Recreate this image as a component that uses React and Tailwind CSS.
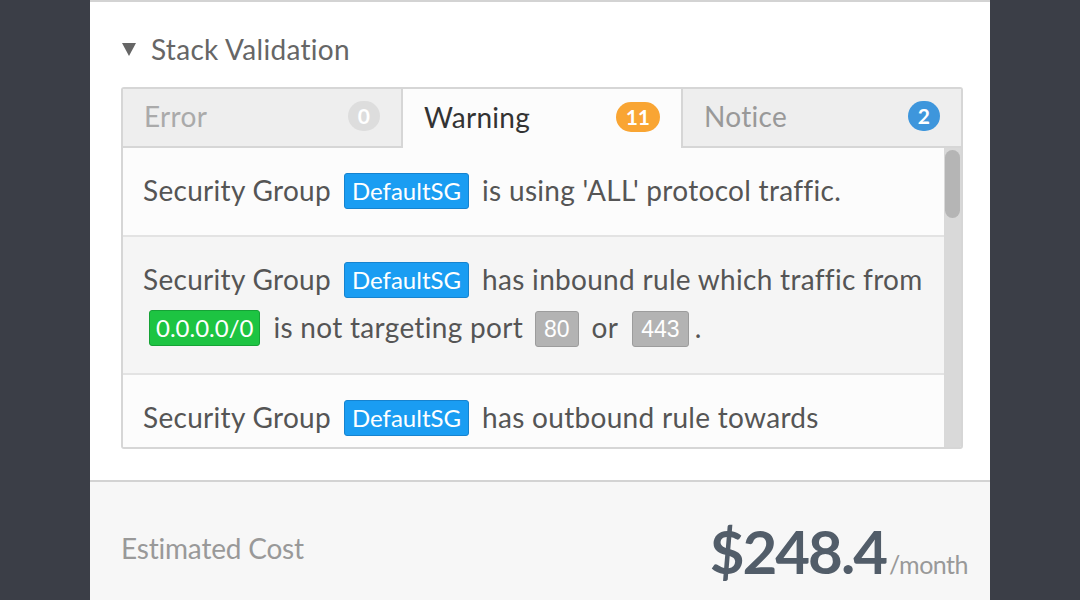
import React from "react";

const Tag = ({ color, children, className = "mx-[13px]" }) => {
  const cls =
    color === "blue"
      ? "bg-[#1a9df2] border-[#1683cf] px-[7px] text-[24px]"
      : color === "green"
      ? "bg-[#1dc442] border-[#16a236] px-[6px] text-[24px]"
      : "bg-[#b3b3b3] border-[#9c9c9c] px-[8px] text-[23px]";
  const font =
    color ? {} : { fontFamily: "'Liberation Sans', Arial, sans-serif" };
  return (
    <span
      className={`inline-block align-[1px] border ${cls} rounded-[3px] text-white leading-[34px] tracking-normal ${className}`}
      style={font}
    >
      {children}
    </span>
  );
};

const Tab = ({ label, count, active, badge, labelColor, last }) => (
  <div
    className={`flex-1 flex items-center justify-between pl-[21px] pr-[21px] pb-[3px] h-[59px] ${
      active ? "bg-[#fcfcfc]" : "bg-[#eeeeee] border-b-2 border-[#d6d6d6]"
    } ${last ? "" : "border-r-2 border-r-[#d6d6d6]"}`}
  >
    <span className={`text-[28px] tracking-[0.3px] ${labelColor}`}>{label}</span>
    <span
      className={`${badge} text-white font-bold text-[21px] h-[30px] min-w-[30px] px-[10px] rounded-full flex items-center justify-center`}
    >
      {count}
    </span>
  </div>
);

export default function App() {
  return (
    <div
      className="w-[1080px] h-[600px] bg-[#3b3e47] flex justify-center overflow-hidden"
      style={{ fontFamily: "Lato, 'Noto Sans', sans-serif" }}
    >
      <div className="w-[900px] h-[600px] bg-white flex flex-col border-t-2 border-[#d3d3d3]">
        <div className="pl-[31px] pr-[27px] pt-[31px] pb-[31px]">
          <div className="flex items-center h-[32px] text-[#666] text-[28px] tracking-[0.3px]">
            <svg width="14" height="14" viewBox="0 0 14 14" className="mr-[15px] ml-[1px]">
              <polygon points="0,1 14,1 7,14" fill="#666" />
            </svg>
            <span>Stack Validation</span>
          </div>
          <div className="mt-[22px] border-2 border-[#d6d6d6] rounded-[3px] overflow-hidden">
            <div className="flex">
              <Tab label="Error" count="0" badge="bg-[#dddddd]" labelColor="text-[#aaaaaa]" />
              <Tab label="Warning" count="11" active badge="bg-[#f9a533]" labelColor="text-[#333333]" />
              <Tab label="Notice" count="2" badge="bg-[#3e96dc]" labelColor="text-[#999999]" last />
            </div>
            <div className="flex h-[299px] overflow-hidden">
              <div className="flex-1 min-w-0 text-[28px] tracking-[0.3px] text-[#555555] leading-[48px]">
                <div className="bg-[#fcfcfc] pl-[20px] pt-[18px] pb-[21px] border-b-2 border-[#e3e3e3] whitespace-nowrap">
                  Security Group<Tag color="blue">DefaultSG</Tag>is using 'ALL' protocol traffic.
                </div>
                <div className="bg-[#f5f5f5] pl-[20px] pt-[18px] pb-[22px] border-b-2 border-[#e3e3e3] whitespace-nowrap">
                  <div>
                    Security Group<Tag color="blue">DefaultSG</Tag>has inbound rule which traffic from
                  </div>
                  <div>
                    <Tag color="green" className="ml-[6px] mr-[13px]">0.0.0.0/0</Tag>is not targeting port
                    <Tag className="ml-[12px] mr-[13px]">80</Tag>or
                    <Tag className="ml-[14px] mr-[6px]">443</Tag>.
                  </div>
                </div>
                <div className="bg-[#fcfcfc] pl-[20px] pt-[18px] pb-[20px] whitespace-nowrap">
                  Security Group<Tag color="blue">DefaultSG</Tag>has outbound rule towards
                </div>
              </div>
              <div className="w-[17px] bg-[#d9d9d9] flex flex-col pt-[2px] items-center shrink-0">
                <div className="w-[15px] h-[68px] bg-[#b5b5b5] rounded-full"></div>
              </div>
            </div>
          </div>
        </div>
        <div className="flex-1 bg-[#f7f7f7] border-t-2 border-[#d3d3d3] flex items-center justify-between pl-[31px] pr-[22px] pt-[14px]">
          <span className="text-[28px] text-[#999999] tracking-[-0.2px]">Estimated Cost</span>
          <span className="flex items-baseline pt-[5px]">
            <span className="text-[60px] font-bold text-[#525d69] tracking-[-2px]">$248.4</span>
            <span className="text-[25px] text-[#999999] ml-[3px] tracking-[-0.5px]">/month</span>
          </span>
        </div>
      </div>
    </div>
  );
}
